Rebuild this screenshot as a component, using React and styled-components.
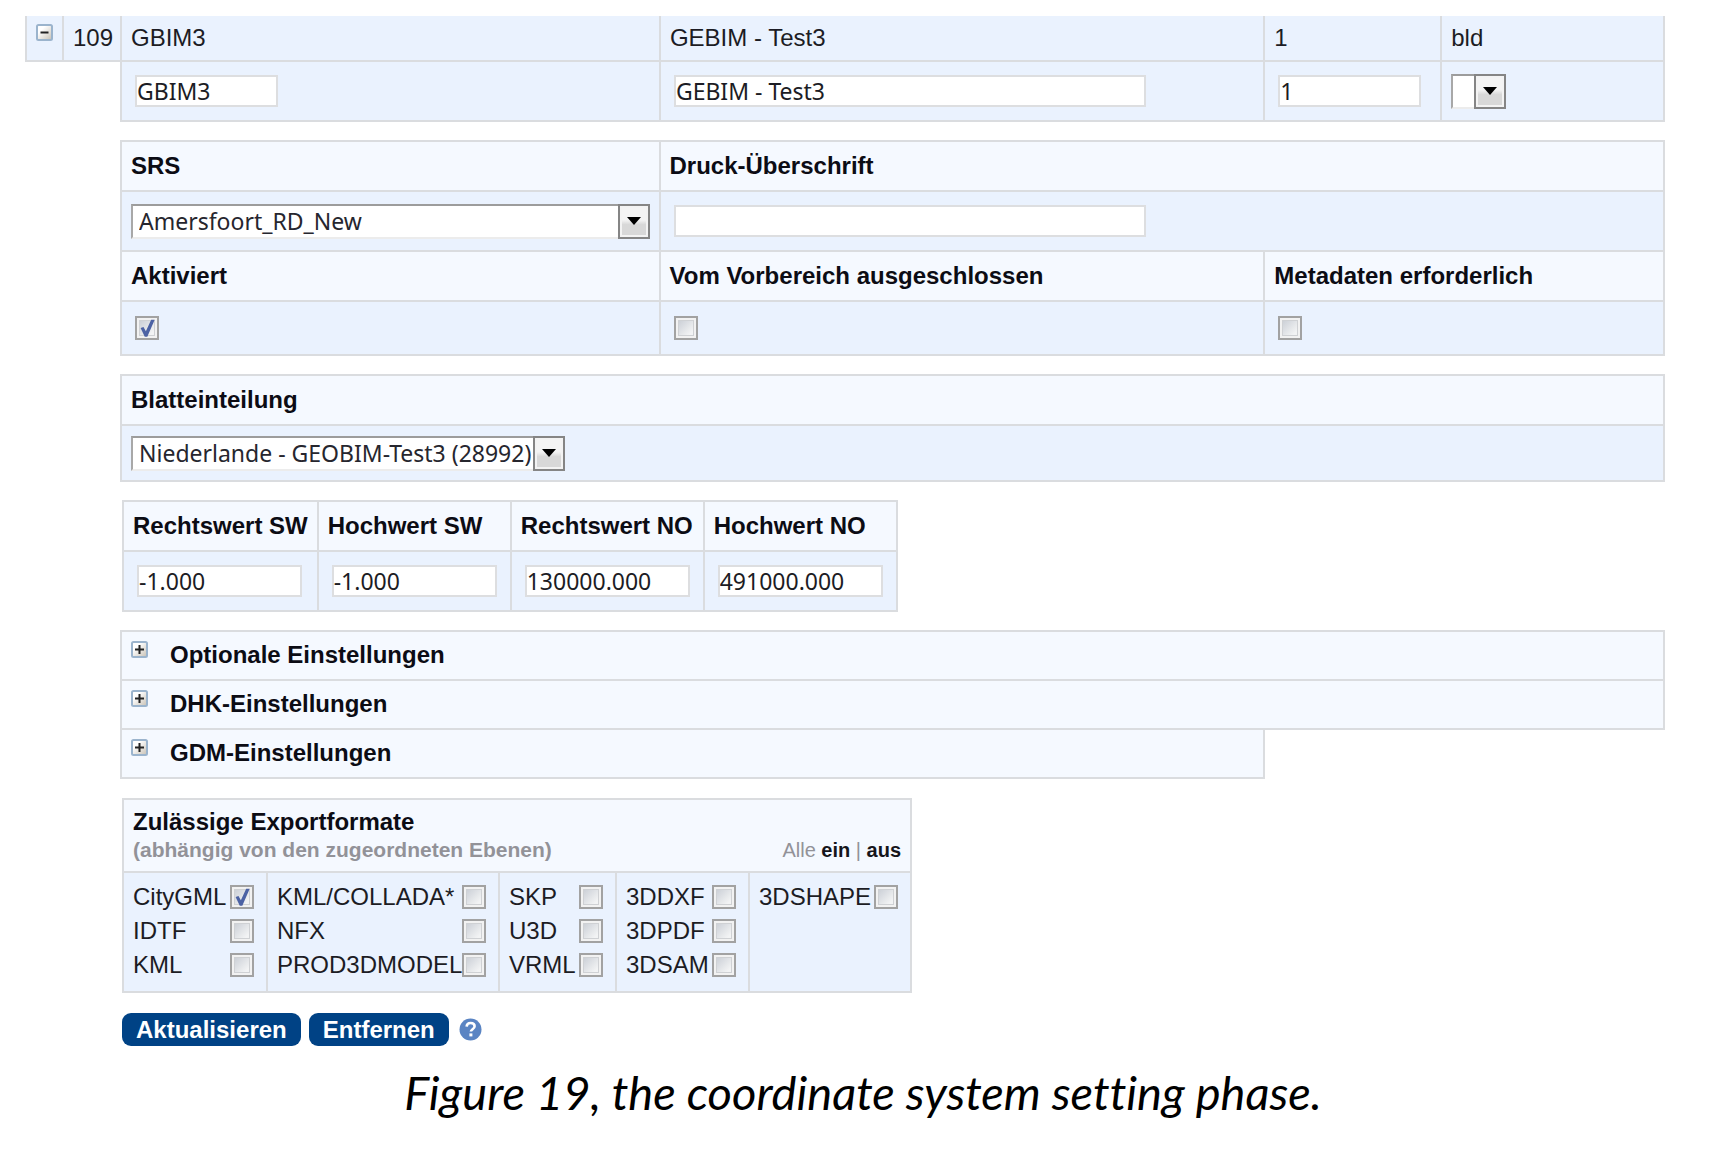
import React, { useState } from "react";
import styled, { createGlobalStyle } from "styled-components";

const line = "#dadcdf";
const cellBlue = "#eaf2fe";
const headBlue = "#f5f9ff";

const GlobalStyle = createGlobalStyle`
  *, *::before, *::after { box-sizing: border-box; }
  body {
    margin: 0;
    background: #fff;
    color: #1c1c24;
    font: 24px/28px "Liberation Sans", Arial, sans-serif;
  }
`;

const Page = styled.main`
  padding: 16px 49px 24px 25px;
`;

const Details = styled.form`
  display: flex;
  flex-direction: column;
  align-items: flex-start;
  gap: 18px;
  margin: 18px 0 0 95px;
`;

const Table = styled.table`
  width: ${(p) => p.$width || "auto"};
  margin-left: ${(p) => (p.$inset ? "2px" : "0")};
  table-layout: ${(p) => (p.$width ? "fixed" : "auto")};
  border-collapse: collapse;
`;

const Col = styled.col`
  width: ${(p) => p.$w};
`;

const Head = styled.th`
  height: ${(p) => p.$h || 50}px;
  padding: 0 9px;
  border: 2px solid ${line};
  background: ${headBlue};
  color: #0c0c14;
  text-align: left;
  white-space: nowrap;
`;

const Cell = styled.td`
  height: ${(p) => p.$h || 60}px;
  padding: 0 9px;
  border: 2px solid ${line};
  background: ${cellBlue};
  vertical-align: middle;
`;

const RecordCell = styled(Cell)`
  height: 45px;
  border-top: 0;
  text-align: ${(p) => p.$align || "left"};
`;

const IconCell = styled(RecordCell)`
  padding-top: 8px;
  vertical-align: top;
`;

const Blank = styled.td`
  padding: 0;
`;

const TextInput = styled.input`
  display: block;
  width: ${(p) => p.$w}px;
  max-width: 100%;
  height: 32px;
  margin: 0 4px;
  padding: 0;
  border: 2px solid #dddee0;
  border-radius: 0;
  background: #fff;
  color: #1c1c24;
  font: 23px/28px "Noto Sans", Tahoma, sans-serif;
  outline-offset: 1px;
`;

const SelectBox = styled.div`
  display: grid;
  grid-template-columns: 1fr 32px;
  width: ${(p) => p.$w};
  height: 35px;
`;

const NativeSelect = styled.select`
  grid-area: 1 / 1 / 2 / 3;
  width: 100%;
  height: 35px;
  padding: 0 24px 0 6px;
  appearance: none;
  border: 2px solid;
  border-color: #9c9c9c #e6e6e6 #ececec #a8a8a8;
  border-radius: 0;
  background: #fff;
  color: #26262e;
  font: 23px/28px "Noto Sans", Tahoma, sans-serif;
`;

const ArrowBox = styled.span`
  grid-area: 1 / 2;
  display: flex;
  align-items: center;
  justify-content: center;
  z-index: 1;
  border: 2px solid #858585;
  background: linear-gradient(#f4f4f4 0 45%, #d8d8d8 60% 100%);
  box-shadow: inset 0 0 0 2px #f3f3f3;
  pointer-events: none;
`;

const Tick = styled.input.attrs({ type: "checkbox" })`
  display: grid;
  flex: none;
  place-items: center;
  width: 24px;
  height: 24px;
  margin: 0 4px;
  appearance: none;
  border: 2px solid #a2a2a2;
  background: linear-gradient(135deg, #c3c8d0, #f2f3f4 75%);
  box-shadow: inset 0 0 0 2px #f2f2f2, inset 0 0 0 3px #cfd1d4;

  &:checked::after {
    content: "";
    width: 16px;
    height: 18px;
    background: #4c62a4;
    clip-path: polygon(10% 50%, 28% 45%, 43% 68%, 76% 4%, 98% 4%, 52% 98%, 36% 98%);
  }
`;

const Toggle = styled.button`
  display: flex;
  align-items: flex-start;
  gap: 22px;
  width: ${(p) => p.$w || "100%"};
  height: 51px;
  padding: 9px;
  border: 2px solid ${line};
  background: ${headBlue};
  color: #0c0c14;
  font: bold 24px/28px "Liberation Sans", Arial, sans-serif;
  text-align: left;
  cursor: pointer;

  & + & { margin-top: -2px; }
`;

const Sections = styled.div`
  width: 100%;
  padding-bottom: 1px;
`;

const IconButton = styled.button`
  display: block;
  padding: 0;
  border: 0;
  background: none;
  cursor: pointer;
`;

const ExpandSvg = styled.svg`
  display: block;
  flex: none;
  width: 17px;
  height: 17px;
`;

const ExportHead = styled.div`
  display: flex;
  align-items: flex-end;
  justify-content: space-between;
`;

const Note = styled.div`
  color: #929298;
  font-size: 21px;
`;

const AllSwitch = styled.div`
  color: #929298;
  font-size: 20px;
  font-weight: normal;
`;

const TextLink = styled.a`
  color: #15151b;
  font-weight: bold;
  text-decoration: none;
`;

const Formats = styled.div`
  display: flex;
  flex-direction: column;
  gap: 6px;
  height: 98px;
`;

const Format = styled.label`
  display: flex;
  align-items: center;
  justify-content: space-between;

  ${Tick} { margin: 0 3px 0 0; }
`;

const Actions = styled.div`
  display: flex;
  align-items: center;
  gap: 8px;
  margin: 2px 0 0 2px;
`;

const Action = styled.button`
  height: 33px;
  padding: 0 14px;
  border: 0;
  border-radius: 9px;
  background: #004285;
  color: #fff;
  font: bold 24px/32px "Liberation Sans", Arial, sans-serif;
  cursor: pointer;
`;

const Help = styled(IconButton)`
  margin-left: 2px;
`;

const HelpSvg = styled.svg`
  display: block;
  width: 23px;
  height: 23px;
`;

const Caption = styled.p`
  margin: 18px 0 0;
  padding-left: 36px;
  color: #000;
  font: italic 47px/56px Lato, Carlito, sans-serif;
  font-variant-ligatures: none;
  text-align: center;
`;

function ExpandIcon({ open }) {
  return (
    <ExpandSvg viewBox="0 0 17 17" aria-hidden="true">
      <defs>
        <linearGradient id="boxFace" x1="0" y1="0" x2="1" y2="1">
          <stop offset="0.3" stopColor="#ffffff" />
          <stop offset="1" stopColor="#c6bfb2" />
        </linearGradient>
      </defs>
      <rect x="1" y="1" width="15" height="15" rx="1.5" fill="url(#boxFace)" stroke="#9bb4cd" strokeWidth="2" />
      <path d={open ? "M4.5 8.5h8" : "M4 8.5h9M8.5 4v9"} stroke="#222" strokeWidth="2" />
    </ExpandSvg>
  );
}

function Select({ width, options, ...rest }) {
  return (
    <SelectBox $w={width}>
      <NativeSelect {...rest}>
        {options.map((o) => (
          <option key={o}>{o}</option>
        ))}
      </NativeSelect>
      <ArrowBox>
        <svg width="14" height="8" viewBox="0 0 14 8" aria-hidden="true">
          <path d="M0 0h14L7 8z" fill="#000" />
        </svg>
      </ArrowBox>
    </SelectBox>
  );
}

const corners = [
  ["Rechtswert SW", "-1.000"],
  ["Hochwert SW", "-1.000"],
  ["Rechtswert NO", "130000.000"],
  ["Hochwert NO", "491000.000"],
];

const formatColumns = [
  { width: "144px", names: ["CityGML", "IDTF", "KML"] },
  { width: "232px", names: ["KML/COLLADA*", "NFX", "PROD3DMODEL"] },
  { width: "117px", names: ["SKP", "U3D", "VRML"] },
  { width: "133px", names: ["3DDXF", "3DPDF", "3DSAM"] },
  { width: "162px", names: ["3DSHAPE"] },
];

const allFormats = formatColumns.flatMap((c) => c.names);

export default function App() {
  const [formats, setFormats] = useState(["CityGML"]);

  const toggle = (name) =>
    setFormats((f) => (f.includes(name) ? f.filter((n) => n !== name) : [...f, name]));

  const setAll = (list) => (e) => {
    e.preventDefault();
    setFormats(list);
  };

  return (
    <Page>
      <GlobalStyle />
      <Table $width="100%">
        <colgroup>
          <Col $w="37px" />
          <Col $w="58px" />
          <Col $w="32.9%" />
          <Col $w="36.9%" />
          <Col $w="10.8%" />
          <Col />
        </colgroup>
        <tbody>
          <tr>
            <IconCell>
              <IconButton type="button" aria-label="Zuklappen">
                <ExpandIcon open />
              </IconButton>
            </IconCell>
            <RecordCell $align="right">109</RecordCell>
            <RecordCell>GBIM3</RecordCell>
            <RecordCell>GEBIM - Test3</RecordCell>
            <RecordCell>1</RecordCell>
            <RecordCell>bld</RecordCell>
          </tr>
          <tr>
            <Blank colSpan={2} />
            <Cell><TextInput $w={143} aria-label="Kürzel" defaultValue="GBIM3" /></Cell>
            <Cell><TextInput $w={472} aria-label="Name" defaultValue="GEBIM - Test3" /></Cell>
            <Cell><TextInput $w={143} aria-label="Nummer" defaultValue="1" /></Cell>
            <Cell><Select width="55px" aria-label="Typ" options={[""]} /></Cell>
          </tr>
        </tbody>
      </Table>

      <Details onSubmit={(e) => e.preventDefault()}>
        <Table $width="100%">
          <colgroup>
            <Col $w="34.9%" />
            <Col $w="39.2%" />
            <Col />
          </colgroup>
          <tbody>
            <tr>
              <Head><label htmlFor="srs">SRS</label></Head>
              <Head colSpan={2}><label htmlFor="title">Druck-Überschrift</label></Head>
            </tr>
            <tr>
              <Cell><Select id="srs" width="100%" options={["Amersfoort_RD_New"]} /></Cell>
              <Cell colSpan={2}><TextInput id="title" $w={472} /></Cell>
            </tr>
            <tr>
              <Head><label htmlFor="active">Aktiviert</label></Head>
              <Head><label htmlFor="excluded">Vom Vorbereich ausgeschlossen</label></Head>
              <Head><label htmlFor="metadata">Metadaten erforderlich</label></Head>
            </tr>
            <tr>
              <Cell $h={54}><Tick id="active" defaultChecked /></Cell>
              <Cell $h={54}><Tick id="excluded" /></Cell>
              <Cell $h={54}><Tick id="metadata" /></Cell>
            </tr>
          </tbody>
        </Table>

        <Table $width="100%">
          <tbody>
            <tr><Head><label htmlFor="sheets">Blatteinteilung</label></Head></tr>
            <tr>
              <Cell $h={56}>
                <Select id="sheets" width="434px" options={["Niederlande - GEOBIM-Test3 (28992)"]} />
              </Cell>
            </tr>
          </tbody>
        </Table>

        <Table $inset>
          <tbody>
            <tr>
              {corners.map(([name], i) => (
                <Head key={name}><label htmlFor={`corner${i}`}>{name}</label></Head>
              ))}
            </tr>
            <tr>
              {corners.map(([name, value], i) => (
                <Cell key={name}><TextInput id={`corner${i}`} $w={165} defaultValue={value} /></Cell>
              ))}
            </tr>
          </tbody>
        </Table>

        <Sections>
          <Toggle type="button"><ExpandIcon />Optionale Einstellungen</Toggle>
          <Toggle type="button"><ExpandIcon />DHK-Einstellungen</Toggle>
          <Toggle type="button" $w="74.1%"><ExpandIcon />GDM-Einstellungen</Toggle>
        </Sections>

        <Table $inset $width="790px">
          <colgroup>
            {formatColumns.map((c) => <Col key={c.width} $w={c.width} />)}
          </colgroup>
          <tbody>
            <tr>
              <Head $h={73} colSpan={5}>
                <ExportHead>
                  <div>
                    Zulässige Exportformate
                    <Note>(abhängig von den zugeordneten Ebenen)</Note>
                  </div>
                  <AllSwitch>
                    Alle <TextLink href="#ein" onClick={setAll(allFormats)}>ein</TextLink>
                    {" | "}
                    <TextLink href="#aus" onClick={setAll([])}>aus</TextLink>
                  </AllSwitch>
                </ExportHead>
              </Head>
            </tr>
            <tr>
              {formatColumns.map((c) => (
                <Cell key={c.width} $h={120}>
                  <Formats>
                    {c.names.map((name) => (
                      <Format key={name}>
                        {name}
                        <Tick checked={formats.includes(name)} onChange={() => toggle(name)} />
                      </Format>
                    ))}
                  </Formats>
                </Cell>
              ))}
            </tr>
          </tbody>
        </Table>

        <Actions>
          <Action type="submit">Aktualisieren</Action>
          <Action type="button">Entfernen</Action>
          <Help type="button" aria-label="Hilfe">
            <HelpSvg viewBox="0 0 23 23" aria-hidden="true">
              <circle cx="11.5" cy="11.5" r="11" fill="#5a84c3" />
              <path d="M7.6 8.6c.2-2.4 1.8-3.6 4-3.6 2.3 0 4 1.3 4 3.3 0 3-3.7 2.9-3.7 5.3" fill="none" stroke="#fff" strokeWidth="2.6" />
              <rect x="10.4" y="15.4" width="3" height="3" fill="#fff" />
            </HelpSvg>
          </Help>
        </Actions>
      </Details>

      <Caption>Figure 19, the coordinate system setting phase.</Caption>
    </Page>
  );
}
